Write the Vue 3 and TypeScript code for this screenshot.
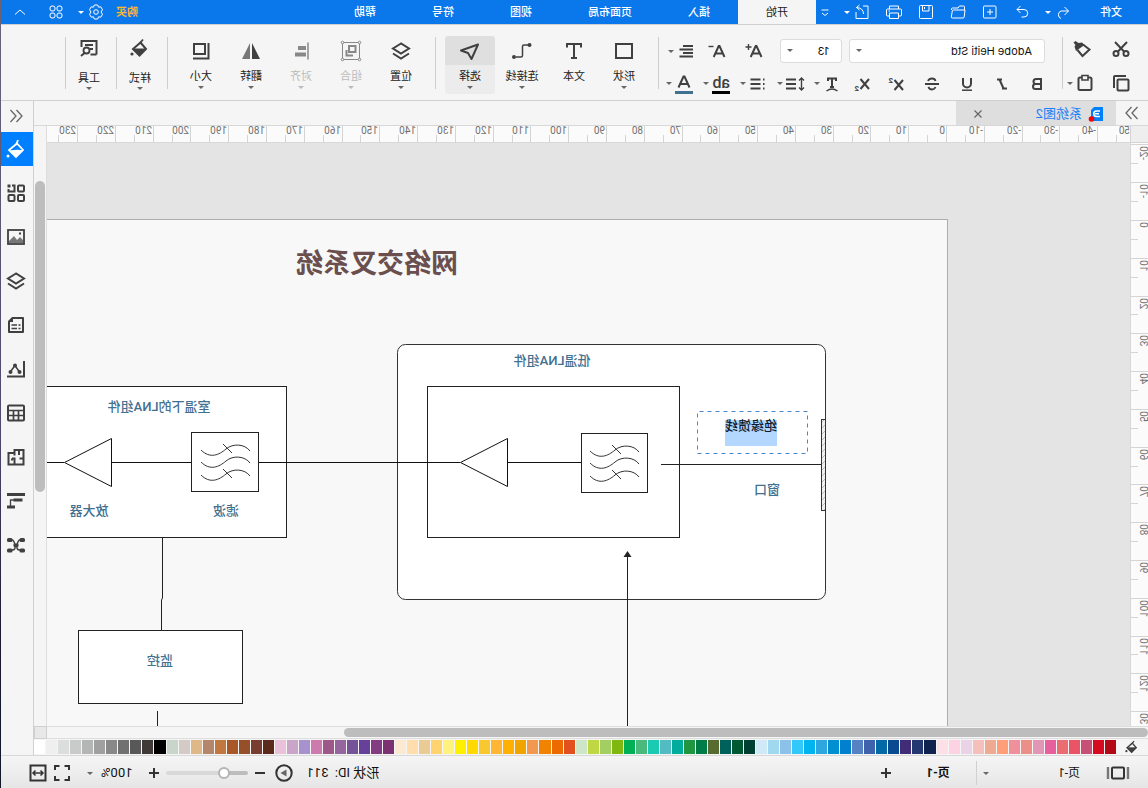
<script setup lang="ts">
import { ref } from 'vue'

interface Tool {
  name: string
  icon: string
  menu?: boolean
}

interface Command {
  label: string
  icon: string
  menu?: boolean
  wide?: boolean
  disabled?: boolean
}

interface Tick {
  pos: number
  label: string
}

const icons: Record<string, string> = {
  undo: '<path d="M4.500 9H12a4 4 0 0 1 0 7.500M8.500 5l-4 4 4 4"/>',
  redo: '<path d="M15 7.500H8a3.700 3.700 0 0 0 0 7.500h2.500M11.500 4L15 7.500 11.500 11"/>',
  create: '<rect x="4" y="4" width="12.500" height="12" rx="1"/><path d="M10 7v6M7 10h6"/>',
  open: '<path d="M3.500 8V5q0-1 1-1h4l1.500 2h5.500q1 0 1 1v1M3 8h11.500q1 0 1.200 1l1 6q0 1-1 1H5q-1 0-1.200-1z"/>',
  save: '<rect x="3.500" y="3.500" width="13" height="13" rx="1"/><path d="M7 3.500V9h6.500V3.500M11.500 5v2"/>',
  print: '<path d="M5.500 7V4h9v3M5 14H3.500q-1 0-1-1V8q0-1 1-1h13q1 0 1 1v5q0 1-1 1H15M5.500 11h9v5.500h-9zM14 9h1.500"/>',
  exporting: '<path d="M9 4H4v12.500h12V10M8.500 12q0-6 7-6.500M12.500 3l3 2.500-3 2.500"/>',
  overflow: '<path d="M6.500 8h7M7 11l3 2.500 3-2.500"/>',
  gear: '<path d="M8.300 3h3.400l.8 2.200 2.300-.4 1.700 3-1.500 2.200 1.500 2.200-1.700 3-2.300-.4-.8 2.200H8.300l-.8-2.200-2.300.4-1.700-3L5 10 3.500 7.800l1.700-3 2.300.4z"/><circle cx="10" cy="10" r="2.300"/>',
  apps: '<rect x="4" y="4" width="5" height="5" rx="2"/><rect x="11" y="4" width="5" height="5" rx="2"/><rect x="4" y="11" width="5" height="5" rx="2"/><rect x="11" y="11" width="5" height="5" rx="2"/>',
  collapse: '<path d="M5 12.500L10 8l5 4.500"/>',
  cut: '<g stroke-width="2"><circle cx="5" cy="14.500" r="2.500"/><circle cx="15" cy="14.500" r="2.500"/><path d="M4 3l9 9.500M16 3l-9 9.500"/></g>',
  painter: '<path d="M18.500 3.500l-2-1.500-3 2-3.500-.5-2.500 2.500 8.500 6 1.500-4.500-1-1.500z" fill="currentColor" stroke="none"/><path d="M14.500 11L9.500 17 2.500 10.500 9 5.500" stroke-width="2"/>',
  copy: '<rect x="2.500" y="6.500" width="11" height="11" rx="1" stroke-width="2"/><path d="M5 3h11q1 0 1 1v11" stroke-width="2"/>',
  paste: '<rect x="3.500" y="4.500" width="13" height="12.500" rx="1.500" stroke-width="2"/><path d="M7 2.500h6v4.500H7z" fill="#f5f5f5" stroke-width="1.600"/>',
  bold: '<path d="M6 5v10h5.500a2.500 2.500 0 0 0 0-5H6h5a2.500 2.500 0 0 0 0-5z" stroke-width="2"/>',
  italic: '<path d="M10 5.500h5M5 14.500h5M12.500 5.500l-4 9" stroke-width="2"/>',
  underline: '<path d="M6 4v5.500a4 4 0 0 0 8 0V4" stroke-width="2"/><path d="M5 16.200h10" stroke-width="1.500"/>',
  strike: '<path d="M14 7q-1-2.500-4-2.500T6.500 7M6.500 13q1 2.500 3.500 2.500t3.700-2.500M3 10h14" stroke-width="1.800"/>',
  sup: '<path d="M4 6l8.500 10M12.500 6L4 16" stroke-width="2"/><text x="14" y="9">2</text>',
  sub: '<path d="M3 5l8.500 10M11.500 5L3 15" stroke-width="2"/><text x="13" y="17">2</text>',
  effect: '<path d="M6 7V4.500h8V7M10 4.500V13M8 13h4" stroke-width="2"/><path d="M4.500 17q5.500-4 11 0" stroke-width="1.500"/>',
  spacing: '<path d="M9 5.500h10M9 10h10M9 14.500h10" stroke-width="2"/><path d="M3.500 4.500v11M1 6.500L3.500 4 6 6.500M1 13.500L3.500 16 6 13.500" stroke-width="1.400"/>',
  list: '<path d="M7.500 5.500h10M7.500 10h10M7.500 14.500h10M3.500 5.500H5M3.500 10H5M3.500 14.500H5" stroke-width="2"/>',
  mark: '<text class="large" x="1" y="14">ab</text><path d="M1 18.500h18" stroke="#000" stroke-width="3"/>',
  color: '<path d="M4.500 13.500l5-11h1l5 11M6.500 10h7" stroke-width="2"/><path d="M1 18.500h18" stroke="#42708f" stroke-width="3"/>',
  grow: '<path d="M2.500 16l5-11h.8l5 11M4.500 12.500h7" stroke-width="2"/><path d="M15.500 3v6M12.500 6h6" stroke-width="1.400"/>',
  shrink: '<path d="M2.500 16l5-11h.8l5 11M4.500 12.500h7" stroke-width="2"/><path d="M13.500 5.500h5" stroke-width="1.400"/>',
  align: '<path d="M3 5h10M3 8.500h13.500M3 12h10M3 15.500h13.500" stroke-width="2"/>',
  shape: '<rect x="2" y="3" width="16" height="14" stroke-width="2"/>',
  text: '<path d="M3 6.500V3h14v3.500M10 3v14M7 17h6" stroke-width="2"/>',
  connector: '<path d="M3 4h5q1.500 0 1.500 1.500v9q0 1.500 1.500 1.500h5" stroke-width="1.500"/><g fill="currentColor" stroke="none"><circle cx="2.500" cy="4" r="2"/><circle cx="18" cy="16" r="2"/></g>',
  select: '<path d="M2 3.500L19 9.500l-7 2.500-3.500 6z" stroke-width="2" stroke-linejoin="round"/>',
  layers: '<path d="M10 2.500L18 7.500l-8 5-8-5z" stroke-width="2"/><path d="M2 12.500l8 5 8-5" stroke-width="2"/>',
  group: '<path d="M1.500 1.500h17v17h-17z"/><g fill="#f5f5f5"><circle cx="1.500" cy="1.500" r="1.300"/><circle cx="18.500" cy="1.500" r="1.300"/><circle cx="1.500" cy="18.500" r="1.300"/><circle cx="18.500" cy="18.500" r="1.300"/></g><path d="M5.500 5h6.500v6H5.500zM14.500 9V14.500H9v-1" stroke-width="2"/>',
  alignment: '<path d="M3 1.500v17" stroke-width="1.500"/><path d="M5 5h8v4H5zM5 11.500h11v4H5z" fill="currentColor" stroke="none"/>',
  flip: '<path d="M9 2v16H1z" fill="currentColor" stroke="none"/><path d="M11 2v16h8z" fill="#777" stroke="none"/>',
  size: '<path d="M6 3h11v10H6zM2.500 2v15.500H18" stroke-width="2"/>',
  bucket: '<path d="M9.500 4.500L17 11l-6.500 6.500L4 11z" stroke-width="2"/><path d="M4 11h13l-6.500 6.500z" fill="currentColor"/><circle cx="18" cy="16" r="1.600" fill="currentColor" stroke="none"/><path d="M9.500 4.500L7 1.500" stroke-width="1.800"/>',
  tools: '<path d="M2.500 16.500V3h15v6M2.500 16.500h6M6 7h8M6 11h3" stroke-width="2"/><circle cx="12.500" cy="12.500" r="3" stroke-width="1.800"/><path d="M14.500 15l3.500 3" stroke-width="2"/>',
  library: '<g stroke-width="2"><rect x="2" y="2.500" width="6" height="6" rx="1"/><rect x="2" y="12" width="6" height="6" rx="1"/><rect x="11.500" y="12" width="6" height="6" rx="1"/><path d="M14 2.500h-2.500v6h6V6"/></g><path d="M15.500 1.500h3v3h-3z" fill="currentColor" stroke="none"/>',
  picture: '<rect x="2" y="3" width="16" height="14" stroke-width="1.800"/><path d="M3 16v-3l3-3 3 3 3-4 5 5v2z" fill="#777" stroke="none"/><path d="M5 6.500h2" stroke-width="2"/>',
  note: '<path d="M3 3h10.500L17 6.500V17H3z" stroke-width="2" stroke-linejoin="round"/><path d="M5.500 10h2M5.500 13.500h2M9 10h5.500M9 13.500h5.500" stroke-width="1.600"/><path d="M13 3v4h4z" fill="currentColor" stroke="none"/>',
  chart: '<path d="M2 2v15.500h17" stroke-width="2"/><path d="M6.500 13L11 6.500l4.500 6" stroke-width="1.500"/><g fill="currentColor" stroke="none"><circle cx="6.500" cy="13" r="2"/><circle cx="11" cy="6.500" r="2"/><circle cx="15.500" cy="13" r="2"/></g>',
  table: '<rect x="2" y="2.500" width="16" height="15" rx="1" stroke-width="2"/><path d="M2 7.500h16M2 12.500h16M7.500 7.500v10M12.500 7.500v10" stroke-width="1.700"/>',
  plan: '<path d="M2.500 3h9v3h6v11.500h-15zM7 3v5M2.500 11.500h4M11.500 17.500v-6h2.500M11.500 6v2.500M14 11.500v2" stroke-width="2"/>',
  gantt: '<path d="M1 3.500h18" stroke-width="3"/><path d="M3.500 9h9M11 16h8" stroke-width="3"/><path d="M11 9h4.500v6" stroke-width="1.300"/>',
  mind: '<path d="M3 5h3q2 0 3 5t-3 5H3M17 5h-3q-2 0-3 5t3 5h3M8 10h4" stroke-width="1.500"/><g fill="currentColor" stroke="none"><rect x="1" y="3" width="5.500" height="4" rx="1.500"/><rect x="13.500" y="3" width="5.500" height="4" rx="1.500"/><rect x="1" y="13.500" width="5.500" height="4" rx="1.500"/><rect x="13.500" y="13.500" width="5.500" height="4" rx="1.500"/><rect x="7.500" y="8.500" width="5" height="3.500" rx="1"/></g>',
  left: '<path d="M9.500 4L4 10l5.500 6M15.500 4L10 10l5.500 6" stroke-width="1.300"/>',
  close: '<path d="M6.500 6.500l7 7M13.500 6.500l-7 7" stroke-width="1.200"/>',
  fill: '<path d="M9 3.500L17 10l-7 7-7-7z" stroke-width="1.800" transform="translate(0 1)"/><path d="M3 11.500q5-1.500 13 0L10 18z" fill="currentColor" stroke="none"/><path d="M10 6L8 1" stroke-width="1.800"/><circle cx="18" cy="17" r="1.500" fill="currentColor" stroke="none"/>',
  pages: '<rect x="4" y="4.500" width="12" height="11" rx="1" stroke-width="2"/><path d="M0 4v12M20 4v12" stroke-width="2.400" stroke="#777"/>',
  plus: '<path d="M10 5v10M5 10h10" stroke-width="2"/>',
  minus: '<path d="M5 10h10" stroke-width="2"/>',
  play: '<circle cx="10" cy="10" r="7.700" stroke-width="2"/><path d="M7.500 6.500v7l6-3.500z" fill="#666" stroke="none"/>',
  full: '<path d="M3 7V3h4.500M12.500 3H17v4M17 13v4h-4.500M7.500 17H3v-4" stroke-width="2"/>',
  fit: '<rect x="2.500" y="2.500" width="15" height="15" stroke-width="2"/><path d="M5.500 10h9M7.500 7.500L5 10l2.500 2.500M12.500 7.500L15 10l-2.500 2.500" stroke-width="1.500"/>'
}

const quickTools: Tool[] = [
  { name: '重做', icon: 'redo' },
  { name: '新建', icon: 'create' },
  { name: '打开', icon: 'open' },
  { name: '保存', icon: 'save' },
  { name: '打印', icon: 'print' },
  { name: '导出', icon: 'exporting' }
]
const menuTabs = ['开始', '插入', '页面布局', '视图', '符号', '帮助']
const activeTab = ref('开始')

const styleTools: Tool[] = [
  { name: '加粗', icon: 'bold' },
  { name: '斜体', icon: 'italic' },
  { name: '下划线', icon: 'underline' },
  { name: '删除线', icon: 'strike' },
  { name: '上标', icon: 'sup' },
  { name: '下标', icon: 'sub' }
]
const splitTools: Tool[] = [
  { name: '文字效果', icon: 'effect' },
  { name: '行距', icon: 'spacing' },
  { name: '项目符号', icon: 'list' },
  { name: '突出显示', icon: 'mark' },
  { name: '字体颜色', icon: 'color' }
]

const drawCommands: Command[] = [
  { label: '形状', icon: 'shape', menu: true },
  { label: '文本', icon: 'text' },
  { label: '连接线', icon: 'connector', menu: true, wide: true },
  { label: '选择', icon: 'select', menu: true }
]
const activeCommand = ref('选择')
const arrangeCommands: Command[] = [
  { label: '位置', icon: 'layers', menu: true },
  { label: '组合', icon: 'group', menu: true, disabled: true },
  { label: '对齐', icon: 'alignment', menu: true, disabled: true },
  { label: '翻转', icon: 'flip', menu: true },
  { label: '大小', icon: 'size', menu: true }
]

const panels: Tool[] = [
  { name: '填充', icon: 'fill' },
  { name: '符号库', icon: 'library' },
  { name: '图片', icon: 'picture' },
  { name: '图层', icon: 'layers' },
  { name: '注释', icon: 'note' },
  { name: '图表', icon: 'chart' },
  { name: '表格', icon: 'table' },
  { name: '平面图', icon: 'plan' },
  { name: '甘特图', icon: 'gantt' },
  { name: '思维导图', icon: 'mind' }
]
const activePanel = ref('填充')

const fontName = ref('Adobe Heiti Std')
const fontSize = ref('13')
const zoom = ref(27)

const palette = (
  'b30916 d60a21 c75077 e95466 eb6d72 e85f9d e096b4 ec8f88 ef909c ff9e78 edab94 f5bfbb ead3e6 fdd3e3 fde0e6 ' +
  '10234f 233870 412c78 094a90 046aa7 3f62ad 5482c2 0080ce 0090d1 2ea7e0 00b4f0 33c8fa 8cc2ea a0d8ef cfe9f6 ' +
  '004032 005930 00605c 576b30 007c48 1f963f 00ac9c 53bcc3 1acbb2 4ab97c 00b054 7fb80e a3cf62 bed742 cde6c7 ' +
  'e2501e ec6a00 f08300 f3984f f0a400 ffb000 ffb733 f8c830 ffd900 fff000 fff27f ffd470 ebcb95 ffdeab fce9d2 ' +
  '7a3270 833b82 674099 745399 95669d 9d5788 cd7bac a891cf c9a6c7 ebc1da 5c2a1b 783c30 95502a a95629 c07840 ' +
  'b4866b deb887 d5cbc6 c9d4cb 000000 3f3938 595858 727171 888988 9fa09f b4b5b5 c9caca dcdddd efefef ffffff'
).split(' ').map((hex) => '#' + hex)

const STEP = 37.78

function majorTicks(origin: number, from: number, to: number): Tick[] {
  const ticks: Tick[] = []
  for (let n = from; n <= to; n++) {
    ticks.push({ pos: Math.round(origin + n * STEP), label: String(n * 10) })
  }
  return ticks
}

function minorTicks(origin: number, from: number, to: number): number[] {
  const ticks: number[] = []
  for (let n = from; n <= to; n++) {
    ticks.push(Math.round(origin + (n + 0.5) * STEP))
  }
  return ticks
}

// A label whose tick lies before the ruler's start keeps only its digits.
const topMajor = majorTicks(183, -5, 23).map((t) =>
  t.pos < 0 ? { ...t, label: t.label.replace('-', ''), x: 0 } : { ...t, x: t.pos + 2 }
)
const topMinor = minorTicks(183, -5, 23)
const sideMajor = majorTicks(77, -2, 13)
const sideMinor = minorTicks(77, -2, 13)
</script>

<template>
  <div class="window">
    <header class="titlebar">
      <button class="file">文件</button>
      <button class="tb" aria-label="撤销"><svg class="icon" viewBox="0 0 20 20" v-html="icons.undo" /></button>
      <button class="drop" aria-label="撤销列表"><i class="caret" /></button>
      <div class="quick">
        <button v-for="t in quickTools" :key="t.icon" class="tb" :aria-label="t.name">
          <svg class="icon" viewBox="0 0 20 20" v-html="icons[t.icon]" />
        </button>
      </div>
      <button class="drop" aria-label="导出列表"><i class="caret" /></button>
      <button class="tb more" aria-label="更多"><svg class="icon" viewBox="0 0 20 20" v-html="icons.overflow" /></button>
      <nav class="tabs">
        <button
          v-for="t in menuTabs"
          :key="t"
          class="tab"
          :class="{ active: t === activeTab }"
          @click="activeTab = t"
        >{{ t }}</button>
      </nav>
      <div class="account">
        <button class="buy">购买</button>
        <button class="tb" aria-label="设置"><svg class="icon" viewBox="0 0 20 20" v-html="icons.gear" /></button>
        <button class="drop" aria-label="设置列表"><i class="caret" /></button>
        <button class="tb apps" aria-label="应用"><svg class="icon" viewBox="0 0 20 20" v-html="icons.apps" /></button>
        <button class="tb fold" aria-label="收起"><svg class="icon" viewBox="0 0 20 20" v-html="icons.collapse" /></button>
      </div>
    </header>

    <section class="ribbon">
      <div class="clipboard">
        <button class="cell" aria-label="剪切"><svg class="icon" viewBox="0 0 20 20" v-html="icons.cut" /></button>
        <button class="cell" aria-label="格式刷"><svg class="icon" viewBox="0 0 20 20" v-html="icons.painter" /></button>
        <button class="cell" aria-label="复制"><svg class="icon" viewBox="0 0 20 20" v-html="icons.copy" /></button>
        <button class="cell split" aria-label="粘贴">
          <svg class="icon" viewBox="0 0 20 20" v-html="icons.paste" /><i class="caret" />
        </button>
      </div>
      <div class="rule" />
      <div class="font">
        <div class="row">
          <label class="combo family">
            <select v-model="fontName" aria-label="字体"><option>Adobe Heiti Std</option></select>
            <i class="caret" />
          </label>
          <label class="combo points">
            <select v-model="fontSize" aria-label="字号"><option>13</option></select>
            <i class="caret" />
          </label>
          <button class="step" aria-label="增大字号"><svg class="icon" viewBox="0 0 20 20" v-html="icons.grow" /></button>
          <button class="step" aria-label="减小字号"><svg class="icon" viewBox="0 0 20 20" v-html="icons.shrink" /></button>
          <button class="split" aria-label="对齐方式">
            <svg class="icon" viewBox="0 0 20 20" v-html="icons.align" /><i class="caret" />
          </button>
        </div>
        <div class="row">
          <button v-for="t in styleTools" :key="t.icon" class="glyph" :aria-label="t.name">
            <svg class="icon" viewBox="0 0 20 20" v-html="icons[t.icon]" />
          </button>
          <button v-for="t in splitTools" :key="t.icon" class="split" :aria-label="t.name">
            <svg class="icon" viewBox="0 0 20 20" v-html="icons[t.icon]" /><i class="caret" />
          </button>
        </div>
      </div>
      <div class="rule" />
      <div class="commands">
        <button
          v-for="c in drawCommands"
          :key="c.label"
          class="command"
          :class="{ active: c.label === activeCommand, wide: c.wide }"
          @click="activeCommand = c.label"
        >
          <svg class="icon" viewBox="0 0 20 20" v-html="icons[c.icon]" />
          <span>{{ c.label }}</span>
          <i v-if="c.menu" class="caret" />
        </button>
      </div>
      <div class="rule" />
      <div class="commands arrange">
        <button v-for="c in arrangeCommands" :key="c.label" class="command" :disabled="c.disabled">
          <svg class="icon" viewBox="0 0 20 20" v-html="icons[c.icon]" />
          <span>{{ c.label }}</span>
          <i v-if="c.menu" class="caret" />
        </button>
      </div>
      <div class="rule" />
      <button class="command low">
        <svg class="icon" viewBox="0 0 20 20" v-html="icons.bucket" />
        <span>样式</span>
        <i class="caret" />
      </button>
      <div class="rule" />
      <button class="command low">
        <svg class="icon" viewBox="0 0 20 20" v-html="icons.tools" />
        <span>工具</span>
        <i class="caret" />
      </button>
      <div class="rule" />
    </section>

    <div class="body">
      <main class="editor">
        <div class="documents">
          <button class="reveal" aria-label="展开左侧面板"><svg class="icon flipped" viewBox="0 0 20 20" v-html="icons.left" /></button>
          <div class="document">
            <svg class="doc-icon" viewBox="0 0 16 16">
              <path d="M1 1h9l3 3v11H1z" fill="#0080ff" />
              <path d="M4 5h3.500a2.700 2.700 0 0 1 0 5.500H4M5 7.700h4" fill="none" stroke="#fff" stroke-width="1.500" />
              <circle cx="12.500" cy="13" r="2.800" fill="#f00" />
            </svg>
            <span>系统图2</span>
            <button class="close" aria-label="关闭"><svg class="icon" viewBox="0 0 20 20" v-html="icons.close" /></button>
          </div>
        </div>

        <div class="stage">
          <div class="corner" />
          <svg class="ruler-top">
            <g v-for="t in topMajor" :key="t.pos">
              <rect :x="t.pos" y="0" width="1" height="17" fill="#d4d4d4" />
              <text :x="t.x" y="8">{{ t.label }}</text>
            </g>
            <rect v-for="p in topMinor" :key="p" :x="p" y="9" width="1" height="8" fill="#d4d4d4" />
          </svg>
          <svg class="ruler-side">
            <g v-for="t in sideMajor" :key="t.label">
              <rect x="0" :y="t.pos" width="18" height="1" fill="#d4d4d4" />
              <text :transform="`translate(8 ${t.pos + 2}) rotate(-90)`" text-anchor="end">{{ t.label }}</text>
            </g>
            <rect v-for="p in sideMinor" :key="p" x="10" :y="p" width="8" height="1" fill="#d4d4d4" />
          </svg>

          <svg class="canvas" role="img" aria-label="网络交叉系统">
            <defs>
              <pattern id="hatch" width="6" height="6" patternUnits="userSpaceOnUse">
                <rect width="6" height="6" fill="#f0f0f0" />
                <path d="M0 0l6 6" stroke="#bbb" stroke-width="1" />
              </pattern>
              <g id="filter-waves" fill="none" stroke="#333">
                <path d="M9 19C14 12 26 11 33 17S49 27 58 18" />
                <path d="M9 31C14 24 26 23 33 29S49 39 58 30" />
                <path d="M9 44C14 37 26 36 33 42S49 52 58 43" />
                <path d="M36 12l-9 9M36 37l-9 9" />
              </g>
            </defs>
            <g transform="translate(-18 -143)">
              <rect x="200.500" y="219.500" width="4000" height="4000" fill="#f8f8f8" stroke="#adadad" />
              <text class="heading" x="771" y="273">网络交叉系统</text>

              <rect x="322.500" y="344.500" width="428" height="255" rx="8" fill="#fff" stroke="#333" />
              <rect x="468.500" y="386.500" width="252" height="151" fill="#fff" stroke="#222" />
              <rect x="322.500" y="419.500" width="4" height="91" fill="url(#hatch)" stroke="#333" />
              <path d="M327 464.500H487" stroke="#222" />
              <text x="596" y="365">低温LNA组件</text>
              <text x="381" y="494">窗口</text>

              <rect x="340.500" y="411.500" width="110" height="42" fill="none" stroke="#4a86c8" stroke-dasharray="4 4" />
              <rect x="371" y="420" width="52" height="26" fill="#b3d7ff" />
              <text class="selected" x="397" y="430">绝缘馈线</text>

              <rect x="861.500" y="386.500" width="4000" height="151" fill="#fff" stroke="#222" />
              <path d="M567 462.500H640M688 462.500H889M957 462.500H1036M1084 462.500H4000" stroke="#111" />
              <rect x="500.500" y="433.500" width="66" height="59" fill="#fff" stroke="#222" />
              <use href="#filter-waves" x="500" y="433" />
              <rect x="889.500" y="432.500" width="67" height="59" fill="#fff" stroke="#222" />
              <use href="#filter-waves" x="889" y="432" />
              <path d="M640.500 438.500v48l47-24z" fill="#fff" stroke="#111" />
              <path d="M1036.500 438.500v48l47-24z" fill="#fff" stroke="#111" />
              <text x="989" y="411">室温下的LNA组件</text>
              <text x="922" y="515">滤波</text>
              <text x="1059" y="515">放大器</text>

              <path d="M985.500 538V598L986.500 600V630" fill="none" stroke="#222" />
              <rect x="905.500" y="630.500" width="164" height="73" fill="#fff" stroke="#222" />
              <text x="988" y="665">监控</text>
              <path d="M990.500 711V4000" stroke="#222" />

              <path d="M520.500 556V4000" stroke="#222" />
              <path d="M520.500 551l4 6h-8z" fill="#222" />
            </g>
          </svg>

          <div class="scroll-y"><div class="thumb" /></div>
          <div class="scroll-x"><div class="thumb" /></div>
          <div class="corner end" />
        </div>

        <div class="palette">
          <button class="fill-button" aria-label="填充颜色"><svg class="icon" viewBox="0 0 20 20" v-html="icons.bucket" /></button>
          <button v-for="c in palette" :key="c" class="swatch" :style="{ background: c }" :aria-label="c" />
        </div>
      </main>

      <aside class="sidebar">
        <button class="reveal" aria-label="收起右侧面板"><svg class="icon" viewBox="0 0 20 20" v-html="icons.left" /></button>
        <button
          v-for="p in panels"
          :key="p.icon"
          class="panel"
          :class="{ active: p.name === activePanel }"
          :aria-label="p.name"
          @click="activePanel = p.name"
        >
          <svg class="icon" viewBox="0 0 20 20" v-html="icons[p.icon]" />
        </button>
      </aside>
    </div>

    <footer class="status">
      <button class="pages" aria-label="页面列表"><svg class="icon" viewBox="0 0 20 20" v-html="icons.pages" /></button>
      <button class="page-menu"><span>页-1</span><i class="caret" /></button>
      <div class="rule" />
      <button class="page current">页-1</button>
      <button class="sb" aria-label="添加页面"><svg class="icon" viewBox="0 0 20 20" v-html="icons.plus" /></button>
      <div class="view">
        <span class="shape-id">形状 ID:&nbsp; 311</span>
        <button class="sb play" aria-label="演示"><svg class="icon" viewBox="0 0 20 20" v-html="icons.play" /></button>
        <button class="sb minus" aria-label="缩小"><svg class="icon" viewBox="0 0 20 20" v-html="icons.minus" /></button>
        <input v-model="zoom" class="slider" type="range" min="0" max="100" aria-label="缩放" />
        <button class="sb" aria-label="放大"><svg class="icon" viewBox="0 0 20 20" v-html="icons.plus" /></button>
        <button class="percent"><span>100%</span><i class="caret" /></button>
        <button class="sb full" aria-label="全屏"><svg class="icon" viewBox="0 0 20 20" v-html="icons.full" /></button>
        <button class="sb fit" aria-label="适合宽度"><svg class="icon" viewBox="0 0 20 20" v-html="icons.fit" /></button>
      </div>
    </footer>
  </div>
</template>

<style>
body {
  margin: 0;
  overflow: hidden;
}

.icon text {
  fill: currentColor;
  stroke: none;
  font: 700 8px Roboto, sans-serif;
}

.icon text.large {
  font: 500 16px Roboto, sans-serif;
}
</style>

<style scoped>
.window {
  box-sizing: border-box;
  display: flex;
  flex-direction: column;
  height: 100vh;
  padding-right: 1px;
  overflow: hidden;
  transform: scaleX(-1);
  background: linear-gradient(#6b6478, #4c4870 55%, #1c1a30 80%, #101828);
  color: #222;
  font: 11px/16px Roboto, "Noto Sans CJK SC", sans-serif;
}

button {
  display: flex;
  align-items: center;
  justify-content: center;
  flex: none;
  margin: 0;
  padding: 0;
  border: 0;
  background: none;
  color: inherit;
  font: inherit;
}

.icon {
  display: block;
  flex: none;
  width: 20px;
  height: 20px;
  fill: none;
  stroke: currentColor;
  stroke-width: 1;
  overflow: visible;
}

.flipped {
  transform: scaleX(-1);
}

.caret {
  display: block;
  flex: none;
  width: 0;
  height: 0;
  border: 3px solid transparent;
  border-top-color: #666;
  border-bottom: 0;
}

.titlebar {
  display: flex;
  flex: none;
  height: 24px;
  border-bottom: 1px solid #d0d0d0;
  background: #0a77eb;
  color: #fff;
}

.titlebar .caret {
  border-top-color: #fff;
}

.file,
.tab,
.buy {
  padding-top: 2px;
}

.file {
  width: 74px;
  margin-right: 1px;
  font-weight: 500;
}

.tb {
  width: 20px;
}

.drop {
  width: 10px;
}

.quick {
  display: flex;
  gap: 12px;
  margin-left: 11px;
}

.more {
  width: 16px;
  margin: 0 1px 0 9px;
}

.tabs {
  display: flex;
}

.tab {
  padding-right: 28px;
  padding-left: 28px;
  font-weight: 500;
}

.tab.active {
  background: #f5f5f5;
  color: #222;
  font-weight: 400;
}

.account {
  display: flex;
  margin-left: auto;
  padding-right: 9px;
}

.buy {
  margin-right: 10px;
  color: #ffb829;
  font-weight: 700;
}

.apps {
  margin: 0 16px 0 10px;
}

.ribbon {
  display: flex;
  flex: none;
  height: 75px;
  border-bottom: 1px solid #d0d0d0;
  background: #f5f5f5;
  color: #404040;
}

.ribbon .rule {
  flex: none;
  width: 1px;
  height: 52px;
  margin-top: 12px;
  background: #cdcdcd;
}

.clipboard {
  display: grid;
  flex: none;
  grid-template-columns: 44px 34px;
  grid-template-rows: 34px 34px;
  align-content: start;
  width: 80px;
  padding: 7px 0 0 5px;
}

.clipboard .split {
  justify-content: flex-start;
  gap: 2px;
  margin-left: 4px;
}

.font {
  display: flex;
  flex: none;
  flex-direction: column;
  width: 403px;
  padding-top: 10px;
}

.font .row {
  display: flex;
  align-items: center;
  height: 33px;
  padding-left: 7px;
}

.font .row:first-child {
  padding-left: 17px;
}

.combo {
  position: relative;
  height: 24px;
  margin-right: 7px;
}

.family {
  width: 196px;
}

.points {
  width: 62px;
}

.combo select {
  box-sizing: border-box;
  width: 100%;
  height: 24px;
  padding: 1px 12px 0;
  border: 1px solid #dcdcdc;
  border-radius: 3px;
  appearance: none;
  background: #fff;
  color: #111;
  font: 11px/21px Inter, sans-serif;
}

.combo .caret {
  position: absolute;
  top: 10px;
  right: 7px;
  pointer-events: none;
}

.step {
  width: 37px;
}

.glyph {
  width: 35px;
}

.font .split {
  justify-content: flex-start;
  gap: 2px;
  width: 37px;
  padding-left: 3px;
}

.commands {
  display: flex;
  width: 222px;
  padding-left: 9px;
  box-sizing: border-box;
}

.commands.arrange {
  width: 267px;
}

.command {
  flex-direction: column;
  justify-content: flex-start;
  width: 50px;
  height: 58px;
  margin-top: 11px;
  padding-top: 5px;
  box-sizing: border-box;
  border-radius: 3px;
  color: #404040;
}

.command.wide {
  width: 54px;
}

.command span {
  margin-top: 8px;
  color: #222;
}

.command .caret {
  margin-top: 1px;
}

.command:disabled .icon {
  color: #888;
}

.command:disabled span {
  color: #bbb;
}

.command:disabled .caret {
  border-top-color: #bbb;
}

.command.active {
  background: linear-gradient(#dfdfdf 29px, #ececec 29px);
}

.command.low {
  padding-top: 2px;
  padding-left: 4px;
}

.command.low span {
  margin-top: 13px;
}

.command.low .caret {
  margin-top: 0;
}

.body {
  display: flex;
  flex: 1;
  min-height: 0;
  background: #f5f5f5;
}

.editor {
  display: flex;
  flex: 1;
  flex-direction: column;
  min-width: 0;
}

.documents {
  display: flex;
  flex: none;
  height: 24px;
  border-bottom: 1px solid #d8d8d8;
}

.reveal {
  width: 32px;
  color: #666;
}

.document {
  display: flex;
  align-items: center;
  width: 160px;
  padding: 2px 12px 0;
  box-sizing: border-box;
  background: #dedede;
  color: #1a80f8;
  font-size: 13px;
}

.doc-icon {
  width: 16px;
  height: 16px;
  margin-right: 6px;
}

.close {
  margin-left: auto;
  color: #666;
}

.stage {
  display: grid;
  flex: 1;
  grid-template-columns: 18px minmax(0, 1fr) 13px;
  grid-template-rows: 17px minmax(0, 1fr) 13px;
  min-height: 0;
}

.corner {
  border-right: 1px solid #d4d4d4;
  border-bottom: 1px solid #d4d4d4;
  background: #eee;
}

.corner.end {
  grid-area: 3 / 3;
  border: 1px solid #d0d0d0;
  background: #e8e8e8;
}

.ruler-top {
  box-sizing: border-box;
  width: 100%;
  height: 17px;
  border-bottom: 1px solid #d8d8d8;
  background: #fbfbfb;
}

.ruler-side {
  box-sizing: border-box;
  grid-area: 2 / 1;
  width: 18px;
  height: 100%;
  border-right: 1px solid #d8d8d8;
  background: #fbfbfb;
}

.ruler-top text,
.ruler-side text {
  fill: #707070;
  font: 10px Roboto, sans-serif;
}

.canvas {
  grid-area: 2 / 2;
  width: 100%;
  height: 100%;
  background: #e4e4e4;
}

.canvas text {
  fill: #42708f;
  font: 500 13px Roboto, "Noto Sans CJK SC", sans-serif;
  text-anchor: middle;
}

.canvas .heading {
  fill: #6b4f4f;
  font-size: 27px;
  font-weight: 700;
}

.canvas .selected {
  fill: #111a2c;
}

.scroll-y {
  grid-area: 1 / 3 / 3 / 4;
  padding: 55px 1px 0;
  border-left: 1px solid #dedede;
}

.scroll-y .thumb {
  height: 57%;
  border-radius: 5px;
  background: #bdbdbd;
}

.scroll-x {
  grid-area: 3 / 1 / 4 / 3;
  padding: 1px 0;
  border-top: 1px solid #dedede;
  border-bottom: 1px solid #dedede;
}

.scroll-x .thumb {
  width: 73%;
  height: 9px;
  border-radius: 5px;
  background: #bdbdbd;
}

.palette {
  display: flex;
  flex: none;
  gap: 1px;
  height: 14px;
  padding: 1px 0;
}

.fill-button {
  width: 31px;
  color: #404040;
}

.fill-button .icon {
  width: 14px;
  height: 14px;
}

.swatch {
  flex: 1;
}

.sidebar {
  display: flex;
  flex: none;
  flex-direction: column;
  gap: 10px;
  width: 32px;
  border-left: 1px solid #d0d0d0;
  color: #404040;
}

.sidebar .reveal {
  height: 30px;
  margin-bottom: -9px;
}

.sidebar button {
  padding-left: 2px;
}

.panel {
  height: 34px;
}

.panel.active {
  background: #0080ff;
  color: #fff;
}

.status {
  display: flex;
  flex: none;
  align-items: center;
  height: 30px;
  padding: 2px 27px 0 20px;
  border-top: 1px solid #d8d8d8;
  background: linear-gradient(#f5f5f5, #e6e6e6);
  color: #333;
  font-size: 12px;
}

.status button span,
.page,
.shape-id {
  color: #111;
}

.page-menu {
  justify-content: space-between;
  width: 97px;
  margin: 0 6px 0 28px;
}

.status .rule {
  width: 1px;
  height: 24px;
  background: #d0d0d0;
}

.page {
  width: 76px;
  font-weight: 700;
}

.sb {
  width: 20px;
}

.status > .sb {
  margin-left: 4px;
}

.view {
  display: flex;
  align-items: center;
  margin-left: auto;
  font-size: 13px;
}

.play {
  margin-left: 12px;
}

.minus {
  margin: 0 2px 0 4px;
}

.slider {
  width: 82px;
  height: 12px;
  margin: 0 2px 0 0;
  appearance: none;
  background: none;
}

.slider::-webkit-slider-runnable-track {
  height: 4px;
  border-radius: 2px;
  background: linear-gradient(90deg, #bdbdbd 27%, #d9d9d9 27%);
}

.slider::-webkit-slider-thumb {
  box-sizing: border-box;
  width: 12px;
  height: 12px;
  margin-top: -4px;
  border: 2px solid #b4b4b4;
  border-radius: 50%;
  appearance: none;
  background: #fff;
}

.percent {
  gap: 8px;
  margin-left: 12px;
}

.full {
  margin-left: 15px;
}

.fit {
  margin-left: 4px;
}
</style>
